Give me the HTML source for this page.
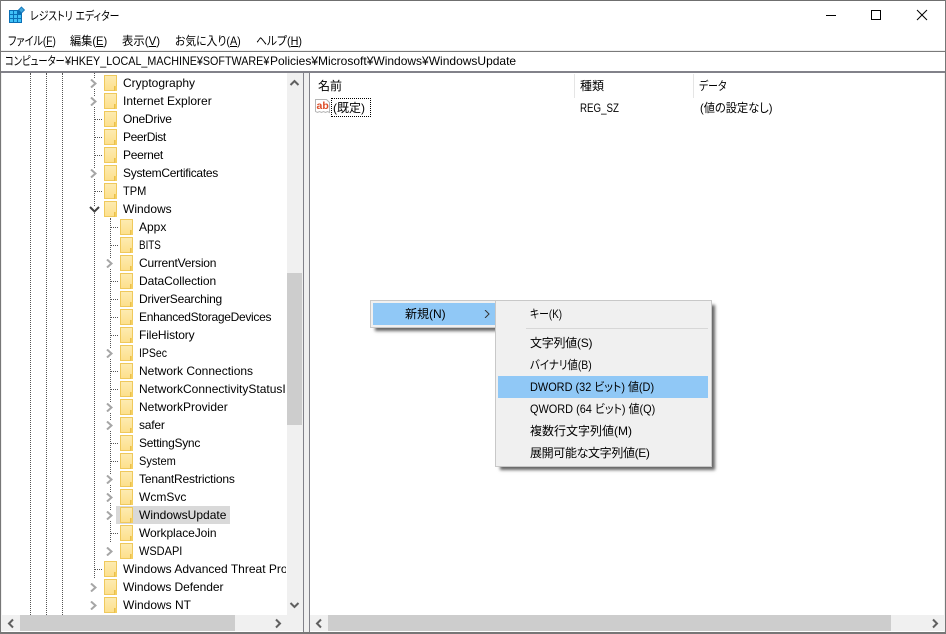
<!DOCTYPE html>
<html lang="ja">
<head>
<meta charset="utf-8">
<title>レジストリ エディター</title>
<style>
html,body{margin:0;padding:0;width:946px;height:634px;overflow:hidden;background:#fff}
body{position:relative;font-family:"Liberation Sans","Noto Sans CJK JP",sans-serif;font-size:12px;color:#000;font-feature-settings:"palt"}
.a{position:absolute}
.t{position:absolute;white-space:nowrap;line-height:18px;height:18px;transform-origin:0 50%}
.t u{text-decoration:underline}
.r{position:absolute;left:0;width:285px;height:18px}
.r .n{position:absolute;top:0;line-height:18px;white-space:nowrap;transform-origin:0 50%}
.l1 .n{left:123px}.l2 .n{left:139px}
.f{position:absolute;top:1px;width:11px;height:14px;background:linear-gradient(#fdebb0,#fde08d);border:1px solid #efc95c}
.f:after{content:"";position:absolute;right:-1px;bottom:-1px;width:2px;height:5px;border-left:1px solid #e9c04d;background:#f5cf60}
.l1 .f{left:104px}.l2 .f{left:120px}
.c{position:absolute;top:5px;width:7px;height:9px;background:#fff;padding:0 1px;margin-left:-1px}
.l1 .c{left:90px}.l2 .c{left:106px}
.d{position:absolute;top:9px;width:7px;border-top:1px dotted #555}
.l1 .d{left:95px}.l2 .d{left:111px}
.v{position:absolute;width:0;border-left:1px dotted #555}
.m{position:absolute;left:530px;white-space:nowrap;line-height:22px;height:22px;transform-origin:0 50%}
</style>
</head>
<body>
<!-- window frame -->
<div class="a" style="left:0;top:0;width:946px;height:1px;background:#6f6f6f"></div>
<div class="a" style="left:0;top:0;width:1px;height:634px;background:#777"></div>
<div class="a" style="left:945px;top:0;width:1px;height:634px;background:#777"></div>
<div class="a" style="left:0;top:632px;width:946px;height:2px;background:#777"></div>

<!-- title -->
<svg class="a" style="left:8px;top:6px" width="18" height="18" viewBox="0 0 18 18">
<rect x="1" y="4" width="13" height="13" fill="#0a6fb5"/>
<g fill="#3fc1f7"><rect x="2" y="5" width="3" height="3"/><rect x="6" y="5" width="3" height="3"/><rect x="2" y="9" width="3" height="3"/><rect x="6" y="9" width="3" height="3"/><rect x="10" y="9" width="3" height="3"/><rect x="2" y="13" width="3" height="3"/><rect x="6" y="13" width="3" height="3"/><rect x="10" y="13" width="3" height="3"/></g>
<path d="M13.5 1l3 3-3 3-3-3z" fill="#3fa5dc" stroke="#0a6fb5" stroke-width=".8"/>
</svg>
<div class="t" style="left:30px;top:7px;transform:scaleX(.82)">レジストリ エディター</div>
<svg class="a" style="left:820px;top:5px" width="115" height="20" viewBox="0 0 115 20" fill="none" stroke="#000">
<path d="M6 10.5h10"/><rect x="51.5" y="5.5" width="9" height="9"/><path d="M97 5l10 10M107 5l-10 10"/>
</svg>

<!-- menu -->
<div class="t" style="left:8px;top:32px;transform:scaleX(.84)">ファイル(<u>F</u>)</div>
<div class="t" style="left:70px;top:32px;transform:scaleX(.93)">編集(<u>E</u>)</div>
<div class="t" style="left:122px;top:32px;transform:scaleX(.95)">表示(<u>V</u>)</div>
<div class="t" style="left:175px;top:32px;transform:scaleX(.9)">お気に入り(<u>A</u>)</div>
<div class="t" style="left:256px;top:32px;transform:scaleX(.9)">ヘルプ(<u>H</u>)</div>

<!-- address bar -->
<div class="a" style="left:1px;top:50px;width:944px;height:1px;background:#f0f0f0"></div>
<div class="a" style="left:1px;top:51px;width:944px;height:1px;background:#7a7a7a"></div>
<div class="a" style="left:1px;top:71px;width:944px;height:2px;background:#82828a"></div>
<div class="t" style="left:5px;top:52px;line-height:19px;transform:scaleX(.77)">コンピューター</div>
<div class="t" style="left:65px;top:52px;line-height:19px;transform:scaleX(.895)">¥HKEY_LOCAL_MACHINE¥SOFTWARE¥</div>
<div class="t" style="left:270px;top:52px;line-height:19px">Policies¥Microsoft¥Windows¥WindowsUpdate</div>

<!-- pane chrome -->
<div class="a" style="left:1px;top:73px;width:1px;height:559px;background:#f0f0f0"></div>
<div class="a" style="left:303px;top:73px;width:7px;height:559px;background:#f0f0f0;box-sizing:border-box;border-left:1px solid #82828a;border-right:1px solid #82828a"></div>
<div class="a" style="left:944px;top:73px;width:1px;height:559px;background:#f0f0f0"></div>

<!-- tree guides -->
<div class="v" style="left:30px;top:73px;height:542px"></div>
<div class="v" style="left:46px;top:73px;height:542px"></div>
<div class="v" style="left:62px;top:73px;height:542px"></div>
<div class="v" style="left:94px;top:73px;height:505px"></div>
<div class="v" style="left:110px;top:218px;height:324px"></div>

<div id="tree" class="a" style="left:0;top:0">
<div class="a" style="left:116px;top:506px;width:114px;height:18px;background:#d9d9d9"></div>

<div class="r l1" style="top:74px"><svg class="c" viewBox="0 0 7 9"><path d="M1 .5l4.500 4-4.500 4" fill="none" stroke="#a6a6a6" stroke-width="2"/></svg><i class="f"></i><span class="n">Cryptography</span></div>
<div class="r l1" style="top:92px"><svg class="c" viewBox="0 0 7 9"><path d="M1 .5l4.500 4-4.500 4" fill="none" stroke="#a6a6a6" stroke-width="2"/></svg><i class="f"></i><span class="n">Internet Explorer</span></div>
<div class="r l1" style="top:110px"><i class="d"></i><i class="f"></i><span class="n" style="letter-spacing:-.25px">OneDrive</span></div>
<div class="r l1" style="top:128px"><i class="d"></i><i class="f"></i><span class="n" style="letter-spacing:-.4px">PeerDist</span></div>
<div class="r l1" style="top:146px"><i class="d"></i><i class="f"></i><span class="n" style="letter-spacing:-.3px">Peernet</span></div>
<div class="r l1" style="top:164px"><svg class="c" viewBox="0 0 7 9"><path d="M1 .5l4.500 4-4.500 4" fill="none" stroke="#a6a6a6" stroke-width="2"/></svg><i class="f"></i><span class="n" style="letter-spacing:-.28px">SystemCertificates</span></div>
<div class="r l1" style="top:182px"><i class="d"></i><i class="f"></i><span class="n" style="transform:scaleX(.92)">TPM</span></div>
<div class="r l1" style="top:200px"><svg class="a" style="left:89px;top:6px;background:#fff" width="11" height="7" viewBox="0 0 11 7"><path d="M1 1l4.500 4.500L10 1" fill="none" stroke="#404040" stroke-width="2"/></svg><i class="f"></i><span class="n">Windows</span></div>

<div class="r l2" style="top:218px"><i class="d"></i><i class="f"></i><span class="n">Appx</span></div>
<div class="r l2" style="top:236px"><i class="d"></i><i class="f"></i><span class="n" style="transform:scaleX(.82)">BITS</span></div>
<div class="r l2" style="top:254px"><svg class="c" viewBox="0 0 7 9"><path d="M1 .5l4.500 4-4.500 4" fill="none" stroke="#a6a6a6" stroke-width="2"/></svg><i class="f"></i><span class="n" style="letter-spacing:-.2px">CurrentVersion</span></div>
<div class="r l2" style="top:272px"><i class="d"></i><i class="f"></i><span class="n" style="letter-spacing:-.07px">DataCollection</span></div>
<div class="r l2" style="top:290px"><i class="d"></i><i class="f"></i><span class="n" style="letter-spacing:-.2px">DriverSearching</span></div>
<div class="r l2" style="top:308px"><i class="d"></i><i class="f"></i><span class="n" style="letter-spacing:-.3px">EnhancedStorageDevices</span></div>
<div class="r l2" style="top:326px"><i class="d"></i><i class="f"></i><span class="n" style="letter-spacing:-.1px">FileHistory</span></div>
<div class="r l2" style="top:344px"><svg class="c" viewBox="0 0 7 9"><path d="M1 .5l4.500 4-4.500 4" fill="none" stroke="#a6a6a6" stroke-width="2"/></svg><i class="f"></i><span class="n" style="transform:scaleX(.875)">IPSec</span></div>
<div class="r l2" style="top:362px"><i class="d"></i><i class="f"></i><span class="n">Network Connections</span></div>
<div class="r l2" style="top:380px;overflow:hidden;width:285px"><i class="d"></i><i class="f"></i><span class="n" style="width:146px;overflow:hidden">NetworkConnectivityStatusI</span></div>
<div class="r l2" style="top:398px"><svg class="c" viewBox="0 0 7 9"><path d="M1 .5l4.500 4-4.500 4" fill="none" stroke="#a6a6a6" stroke-width="2"/></svg><i class="f"></i><span class="n">NetworkProvider</span></div>
<div class="r l2" style="top:416px"><svg class="c" viewBox="0 0 7 9"><path d="M1 .5l4.500 4-4.500 4" fill="none" stroke="#a6a6a6" stroke-width="2"/></svg><i class="f"></i><span class="n" style="letter-spacing:-.2px">safer</span></div>
<div class="r l2" style="top:434px"><i class="d"></i><i class="f"></i><span class="n" style="letter-spacing:-.27px">SettingSync</span></div>
<div class="r l2" style="top:452px"><i class="d"></i><i class="f"></i><span class="n" style="transform:scaleX(.92)">System</span></div>
<div class="r l2" style="top:470px"><svg class="c" viewBox="0 0 7 9"><path d="M1 .5l4.500 4-4.500 4" fill="none" stroke="#a6a6a6" stroke-width="2"/></svg><i class="f"></i><span class="n" style="letter-spacing:-.17px">TenantRestrictions</span></div>
<div class="r l2" style="top:488px"><svg class="c" viewBox="0 0 7 9"><path d="M1 .5l4.500 4-4.500 4" fill="none" stroke="#a6a6a6" stroke-width="2"/></svg><i class="f"></i><span class="n">WcmSvc</span></div>
<div class="r l2" style="top:506px"><svg class="c" viewBox="0 0 7 9"><path d="M1 .5l4.500 4-4.500 4" fill="none" stroke="#a6a6a6" stroke-width="2"/></svg><i class="f"></i><span class="n">WindowsUpdate</span></div>
<div class="r l2" style="top:524px"><i class="d"></i><i class="f"></i><span class="n" style="letter-spacing:-.08px">WorkplaceJoin</span></div>
<div class="r l2" style="top:542px"><svg class="c" viewBox="0 0 7 9"><path d="M1 .5l4.500 4-4.500 4" fill="none" stroke="#a6a6a6" stroke-width="2"/></svg><i class="f"></i><span class="n" style="transform:scaleX(.915)">WSDAPI</span></div>

<div class="r l1" style="top:560px"><i class="d"></i><i class="f"></i><span class="n" style="width:163px;overflow:hidden">Windows Advanced Threat Protection</span></div>
<div class="r l1" style="top:578px"><svg class="c" viewBox="0 0 7 9"><path d="M1 .5l4.500 4-4.500 4" fill="none" stroke="#a6a6a6" stroke-width="2"/></svg><i class="f"></i><span class="n" style="letter-spacing:-.06px">Windows Defender</span></div>
<div class="r l1" style="top:596px"><svg class="c" viewBox="0 0 7 9"><path d="M1 .5l4.500 4-4.500 4" fill="none" stroke="#a6a6a6" stroke-width="2"/></svg><i class="f"></i><span class="n">Windows NT</span></div>
</div>

<!-- tree vertical scrollbar -->
<div class="a" style="left:287px;top:73px;width:16px;height:542px;background:#f0f0f0"></div>
<div class="a" style="left:287px;top:273px;width:15px;height:152px;background:#cdcdcd"></div>
<svg class="a" style="left:289px;top:78px" width="11" height="9" viewBox="0 0 11 9"><path d="M1.500 7L5.500 3l4 4" fill="none" stroke="#606060" stroke-width="2"/></svg>
<svg class="a" style="left:289px;top:601px" width="11" height="9" viewBox="0 0 11 9"><path d="M1.500 2L5.500 6l4-4" fill="none" stroke="#606060" stroke-width="2"/></svg>

<!-- tree horizontal scrollbar -->
<div class="a" style="left:2px;top:615px;width:301px;height:16px;background:#f0f0f0"></div>
<div class="a" style="left:20px;top:615px;width:215px;height:16px;background:#cdcdcd"></div>
<svg class="a" style="left:6px;top:618px" width="9" height="11" viewBox="0 0 9 11"><path d="M7 1.500L3 5.500l4 4" fill="none" stroke="#606060" stroke-width="2"/></svg>
<svg class="a" style="left:274px;top:618px" width="9" height="11" viewBox="0 0 9 11"><path d="M2 1.500L6 5.500l-4 4" fill="none" stroke="#606060" stroke-width="2"/></svg>

<!-- list header -->
<div class="t" style="left:318px;top:77px">名前</div>
<div class="t" style="left:580px;top:77px">種類</div>
<div class="t" style="left:699px;top:77px;transform:scaleX(.82)">データ</div>
<div class="a" style="left:574px;top:74px;width:1px;height:24px;background:#e5e5e5"></div>
<div class="a" style="left:693px;top:74px;width:1px;height:24px;background:#e5e5e5"></div>

<!-- list row -->
<svg class="a" style="left:315px;top:99px" width="16" height="16" viewBox="0 0 16 16">
<path d="M.5.500h11l3 3v10l-2-1-2 1-2-1-2 1-2-1-2 1-2-1z" fill="#fff" stroke="#b5b5b5"/>
<text x="1.500" y="10" font-family="Liberation Sans" font-weight="700" font-size="10.500" fill="#dd4b25">ab</text>
</svg>
<div class="a" style="left:331px;top:98px;width:40px;height:19px;box-sizing:border-box;border:1px dotted #000"></div>
<div class="t" style="left:333px;top:99px">(既定)</div>
<div class="t" style="left:580px;top:99px;transform:scaleX(.81)">REG_SZ</div>
<div class="t" style="left:700px;top:99px;transform:scaleX(.935)">(値の設定なし)</div>

<!-- list horizontal scrollbar -->
<div class="a" style="left:310px;top:615px;width:634px;height:16px;background:#f0f0f0"></div>
<div class="a" style="left:328px;top:615px;width:563px;height:16px;background:#cdcdcd"></div>
<svg class="a" style="left:314px;top:618px" width="9" height="11" viewBox="0 0 9 11"><path d="M7 1.500L3 5.500l4 4" fill="none" stroke="#606060" stroke-width="2"/></svg>
<svg class="a" style="left:931px;top:618px" width="9" height="11" viewBox="0 0 9 11"><path d="M2 1.500L6 5.500l-4 4" fill="none" stroke="#606060" stroke-width="2"/></svg>

<!-- context menu -->
<div class="a" style="left:370px;top:300px;width:128px;height:28px;box-sizing:border-box;background:#f0f0f0;border:1px solid #c8c8c8;box-shadow:4px 4px 3px -1px #666"></div>
<div class="a" style="left:373px;top:303px;width:124px;height:22px;background:#90c8f6"></div>
<div class="t" style="left:405px;top:305px">新規(N)</div>
<svg class="a" style="left:484px;top:310px" width="6" height="8" viewBox="0 0 6 8"><path d="M1 0l4 4-4 4" fill="none" stroke="#333"/></svg>

<div class="a" style="left:495px;top:300px;width:217px;height:167px;box-sizing:border-box;background:#f0f0f0;border:1px solid #c8c8c8;box-shadow:4px 4px 3px -1px #666"></div>
<div class="a" style="left:498px;top:376px;width:210px;height:22px;background:#90c8f6"></div>
<div class="a" style="left:526px;top:328px;width:182px;height:1px;background:#d7d7d7"></div>
<div class="m" style="top:303px;transform:scaleX(.82)">キー(K)</div>
<div class="m" style="top:332px;letter-spacing:-.25px">文字列値(S)</div>
<div class="m" style="top:354px;transform:scaleX(.87)">バイナリ値(B)</div>
<div class="m" style="top:376px;transform:scaleX(.91)">DWORD (32 ビット) 値(D)</div>
<div class="m" style="top:398px;transform:scaleX(.91)">QWORD (64 ビット) 値(Q)</div>
<div class="m" style="top:420px">複数行文字列値(M)</div>
<div class="m" style="top:442px;letter-spacing:-.35px">展開可能な文字列値(E)</div>
</body>
</html>
